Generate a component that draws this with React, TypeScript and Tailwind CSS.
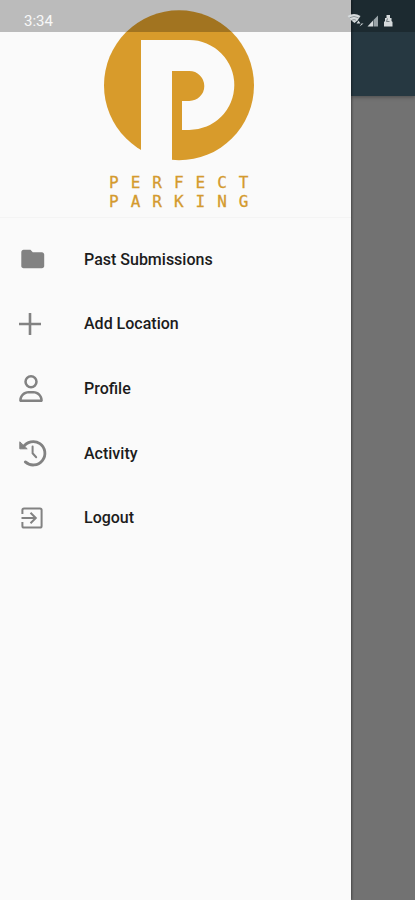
import { FaRegUser } from "react-icons/fa6";
import { MdFolder } from "react-icons/md";

function PlusIcon() {
  return (
    <svg viewBox="0 0 22 22" className="ml-[19px] h-[22px] w-[22px]">
      <path d="M11 0.5V21.5M0.5 11H21.5" stroke="currentColor" strokeWidth="2.6" strokeLinecap="round" />
    </svg>
  );
}

function HistoryIcon() {
  return (
    <svg viewBox="0 0 28 28" className="ml-[19px] h-7 w-7" fill="none" stroke="currentColor" strokeLinecap="round">
      <path d="M4.2 8.2A11.7 11.7 0 1 1 6.3 22.9" strokeWidth="2.8" />
      <path d="M13.6 7.5V14.3L17.2 18.2" strokeWidth="2" />
      <path d="M0.8 3.2V9.8H7.8Z" fill="currentColor" strokeWidth="1" strokeLinejoin="round" />
    </svg>
  );
}

function LogoutIcon() {
  return (
    <svg viewBox="0 0 22 22" className="ml-[21px] h-[22px] w-[22px]" fill="none" stroke="currentColor">
      <path d="M1.4 7V3Q1.4 1.4 3 1.4H19Q20.6 1.4 20.6 3V19Q20.6 20.6 19 20.6H3Q1.4 20.6 1.4 19V15" strokeWidth="2" />
      <path d="M0.5 11H14.5M9.5 5.7L14.8 11L9.5 16.3" strokeWidth="2" />
    </svg>
  );
}

function Logo() {
  return (
    <svg viewBox="104 10 150 151" className="mt-[10px] ml-[104px] h-[151px] w-[150px]">
      <circle cx="179" cy="85.3" r="75" fill="#d89b2b" />
      <path
        d="M141 40H189.3A45 45 0 0 1 189.3 130H182V101H189.3A15 15 0 0 0 189.3 71H172V165H141Z"
        fill="#fafafa"
      />
    </svg>
  );
}

function StatusIcons() {
  return (
    <svg viewBox="0 0 55 24" className="absolute top-2 left-[345px] h-6 w-[55px]" fill="#d5dadc">
      <path d="M2.5 8Q9 4 15.5 8L12.5 12.5L9.5 15L7 13Z" />
      <path d="M4.5 9.8Q9 7 13.5 9.8M7 12.2Q9 10.8 11 12.2" stroke="#7d868a" fill="none" strokeWidth="0.8" />
      <path d="M13.5 12.5L15.5 15.5H11.5ZM14.5 18.5L16.5 15.5H18.5Z" />
      <path d="M22.5 18.5H28V12.5Z" />
      <path d="M28.5 18.5H33V7.5L28.5 12Z" fill="#9aa4a8" />
      <path d="M40 10H41.5V7H45V10H46.5V13L47.5 14V18.5H39V14L40 13Z" />
      <path d="M42.5 10.5L41.5 13.5H44.5" stroke="#5c676c" fill="none" strokeWidth="0.8" />
    </svg>
  );
}

const items = [
  { label: "Past Submissions", icon: <MdFolder className="ml-[18.5px] h-7 w-[27.5px]" /> },
  { label: "Add Location", icon: <PlusIcon /> },
  { label: "Profile", icon: <FaRegUser className="ml-[19px] h-[27px] w-6" /> },
  { label: "Activity", icon: <HistoryIcon /> },
  { label: "Logout", icon: <LogoutIcon /> },
];

export default function App() {
  return (
    <div className="relative flex h-[900px] w-[415px] overflow-hidden bg-[#727272] font-['Roboto',sans-serif]">
      <aside className="z-10 flex w-[351px] shrink-0 flex-col bg-[#fafafa] shadow-[1px_0_2px_rgba(0,0,0,0.4)]">
        <header className="h-[218px] border-b border-[#f4f4f4]">
          <Logo />
          <div className="mt-[12px] ml-[109px] font-['DejaVu_Sans_Mono',monospace] text-[16px] leading-[19px] tracking-[12px] whitespace-nowrap text-[#d49a2e] [-webkit-text-stroke:0.3px_#d49a2e]">
            <div>PERFECT</div>
            <div>PARKING</div>
          </div>
        </header>
        <nav className="mt-[9px] flex flex-col">
          {items.map((item) => (
            <div key={item.label} className="flex h-[64.6px] items-center">
              <div className="w-[84px] shrink-0 text-[#828282]">{item.icon}</div>
              <span className="pt-px text-[16px] font-medium text-[#1c1c1c]">{item.label}</span>
            </div>
          ))}
        </nav>
      </aside>
      <div className="h-24 grow bg-[#263841] shadow-[0_1px_4px_rgba(0,0,0,0.35)]" />

      {/* status bar */}
      <div className="absolute inset-x-0 top-0 z-20 flex h-8 items-center bg-black/25">
        <span className="mt-[10px] ml-6 text-[15px] text-white/90">3:34</span>
        <StatusIcons />
      </div>
    </div>
  );
}
